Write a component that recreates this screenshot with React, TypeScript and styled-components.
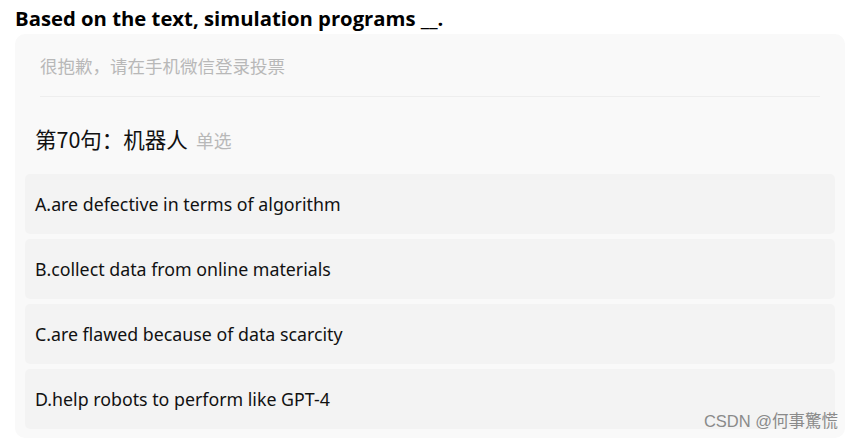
import styled, { createGlobalStyle } from "styled-components";

const options = [
  "A.are defective in terms of algorithm",
  "B.collect data from online materials",
  "C.are flawed because of data scarcity",
  "D.help robots to perform like GPT-4",
];

const App = () => {
  return (
    <Page>
      <GlobalStyle />
      <Heading>Based on the text, simulation programs __.</Heading>
      <Card>
        <Notice>很抱歉，请在手机微信登录投票</Notice>
        <Divider />
        <Question>
          第70句：机器人<Tag>单选</Tag>
        </Question>
        <OptionList>
          {options.map((text) => (
            <Option key={text}>{text}</Option>
          ))}
        </OptionList>
      </Card>
      <Watermark>CSDN @何事驚慌</Watermark>
    </Page>
  );
};

export default App;

const GlobalStyle = createGlobalStyle`
  body {
    margin: 0;
    background: #ffffff;
    font-family: "Noto Sans", "Noto Sans CJK SC", sans-serif;
  }
`;

const Page = styled.div`
  position: relative;
  width: 854px;
  height: 440px;
  padding: 6px 9px 0 15px;
  box-sizing: border-box;
  overflow: hidden;
`;

const Heading = styled.h1`
  margin: 0;
  font-size: 20.3px;
  line-height: 24px;
  font-weight: 700;
  color: #000;
  font-family: "Open Sans", "Noto Sans CJK SC", sans-serif;
`;

const Card = styled.div`
  margin-top: 4px;
  background: #f9f9f9;
  border-radius: 10px;
  padding: 17px 10px 9px 10px;
`;

const Notice = styled.div`
  padding: 0 15px;
  font-size: 17.5px;
  line-height: 30px;
  color: #b8b8b8;
  font-family: "Noto Sans CJK SC", sans-serif;
`;

const Divider = styled.div`
  margin: 15px 15px 0;
  height: 1px;
  background: #eeeeee;
`;

const Question = styled.div`
  display: flex;
  align-items: baseline;
  padding: 0 10px;
  margin-top: 27px;
  font-size: 21.5px;
  line-height: 30px;
  color: #111;
  font-family: "Noto Sans CJK SC", sans-serif;
`;

const Tag = styled.span`
  margin-left: 8px;
  font-size: 17.8px;
  color: #b8b8b8;
`;

const OptionList = styled.div`
  display: flex;
  flex-direction: column;
  gap: 5px;
  margin-top: 19px;
`;

const Option = styled.div`
  height: 60px;
  display: flex;
  align-items: center;
  padding: 0 10px;
  background: #f3f3f3;
  border-radius: 5px;
  font-size: 17.8px;
  color: #111;
`;

const Watermark = styled.div`
  position: absolute;
  right: 16px;
  bottom: 8px;
  font-size: 16.5px;
  color: #8a8a8a;
  font-family: "Liberation Sans", "Noto Sans CJK SC", sans-serif;
`;
